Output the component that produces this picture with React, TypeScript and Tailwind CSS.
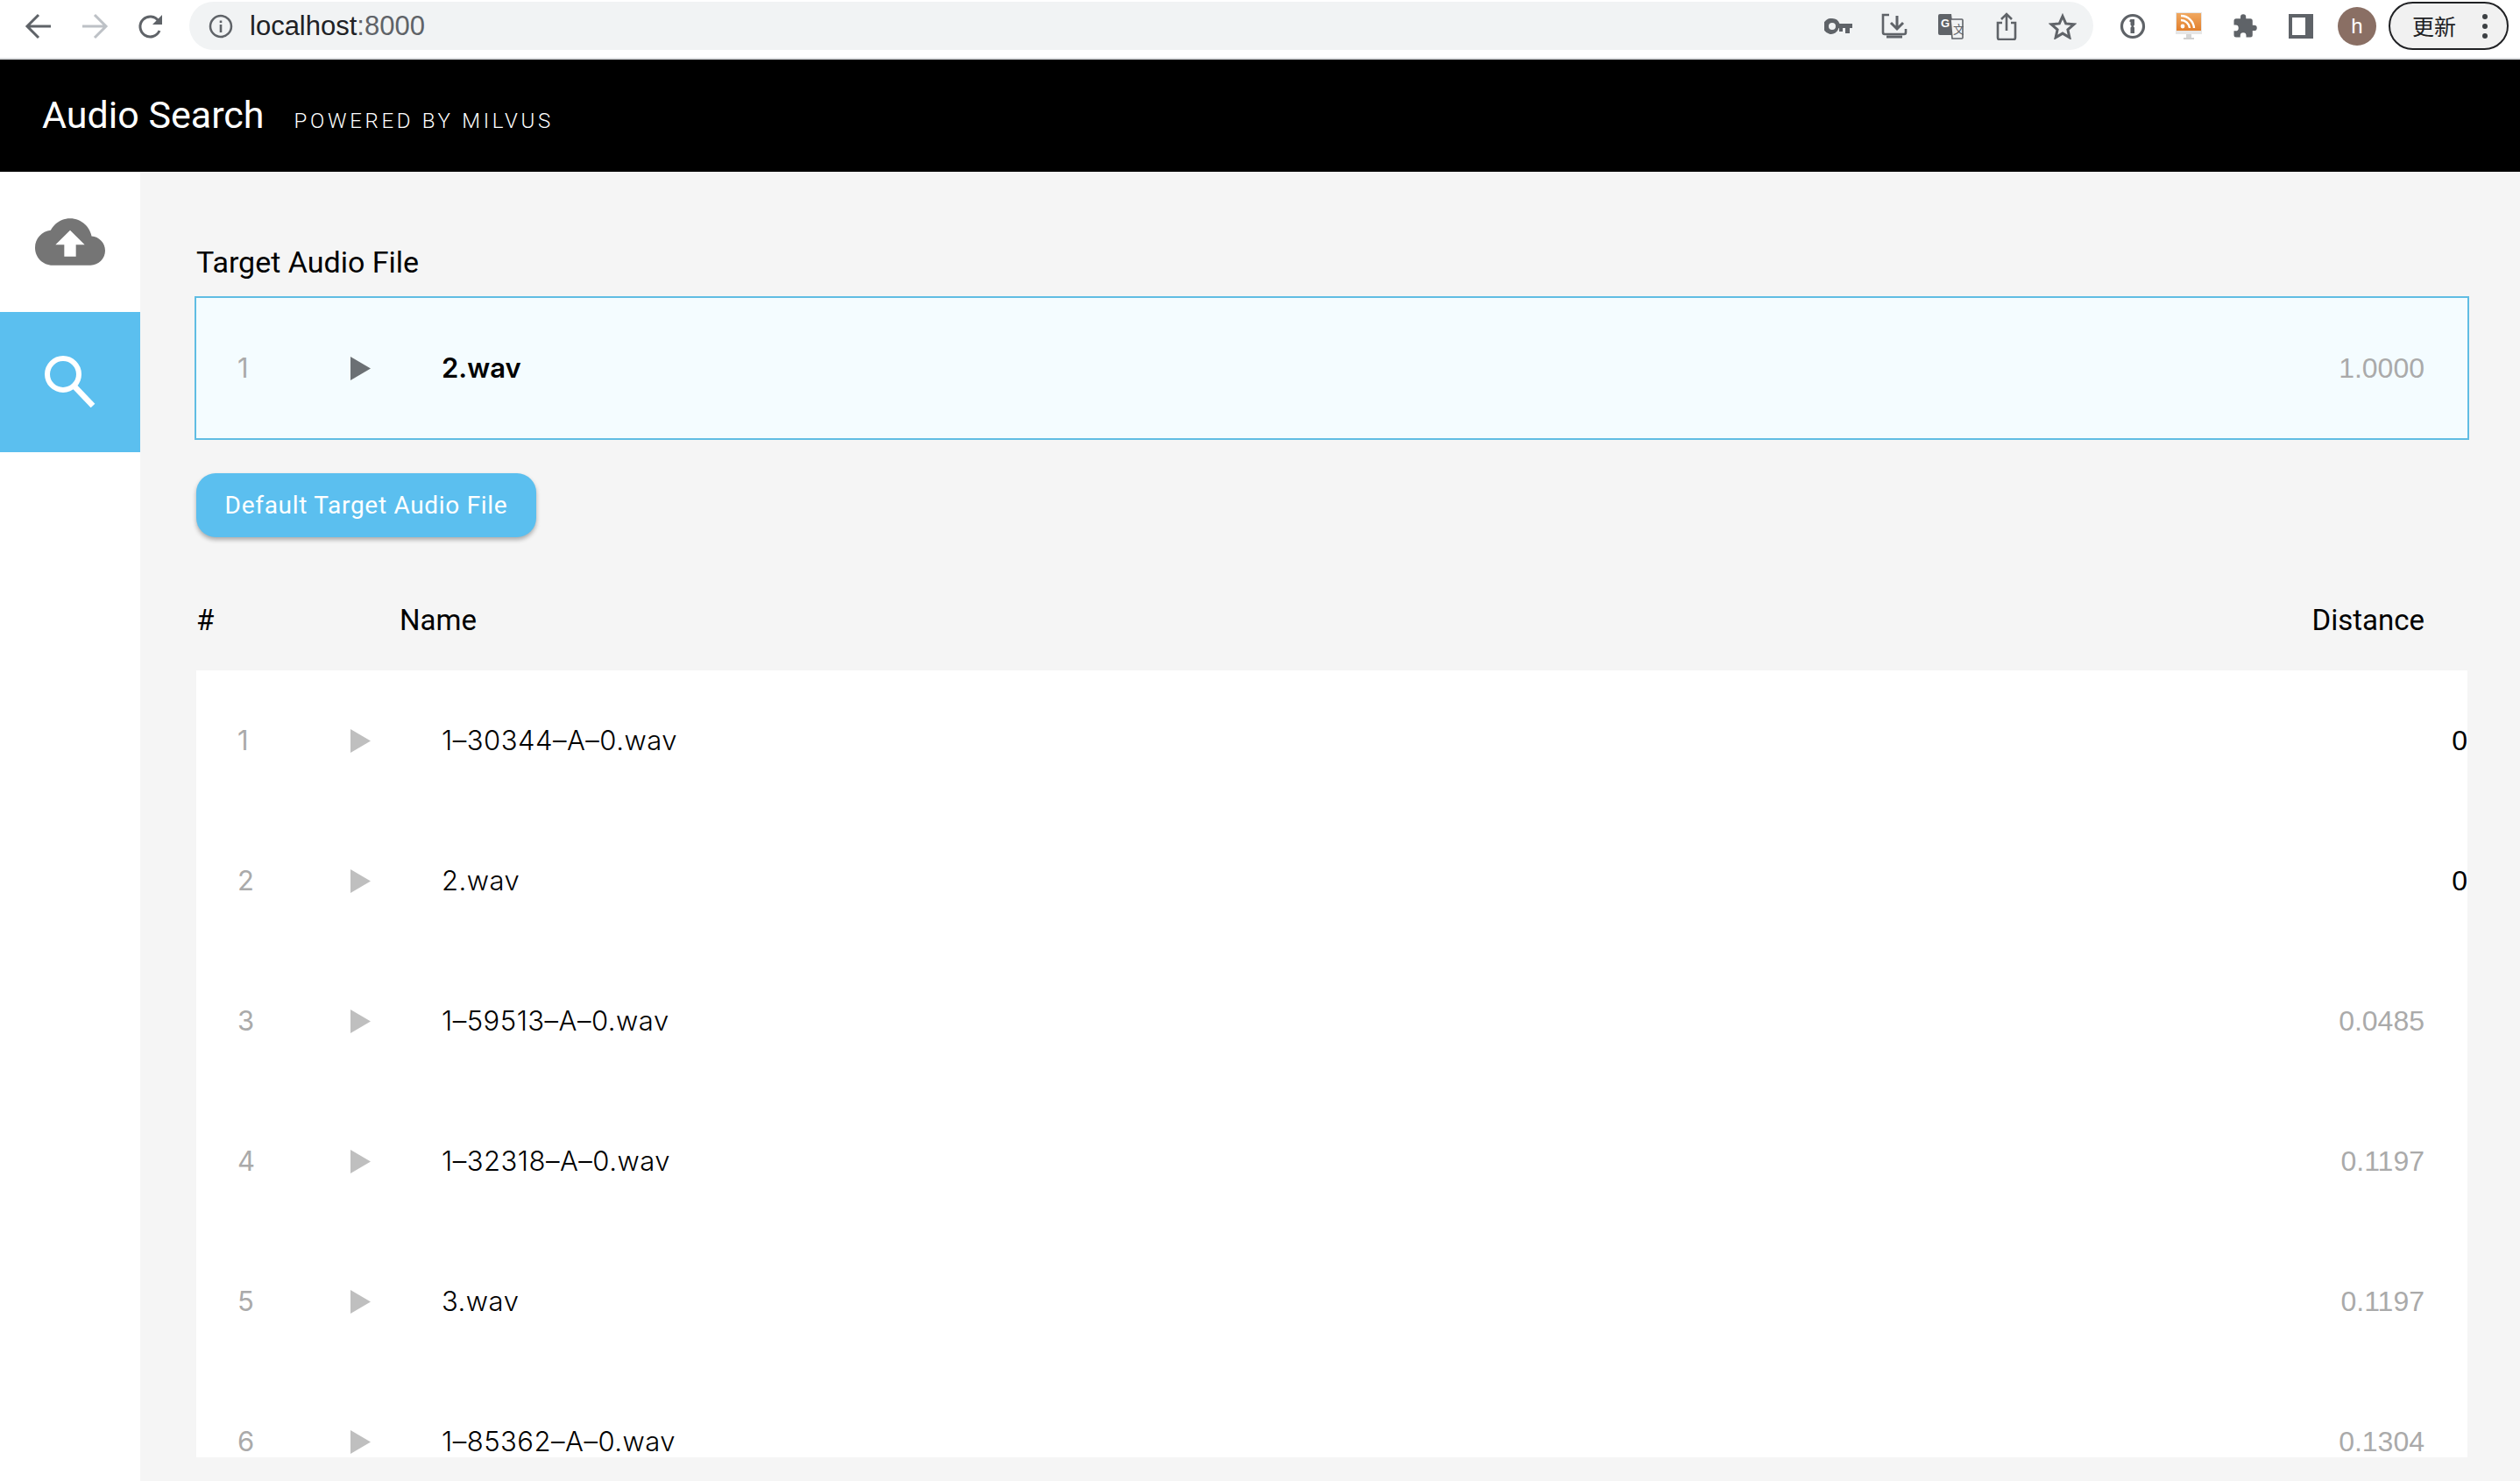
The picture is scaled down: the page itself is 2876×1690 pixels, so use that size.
const rows = [
  { id: 1, name: "1–30344–A–0.wav", distance: "0" },
  { id: 2, name: "2.wav", distance: "0" },
  { id: 3, name: "1–59513–A–0.wav", distance: "0.0485" },
  { id: 4, name: "1–32318–A–0.wav", distance: "0.1197" },
  { id: 5, name: "3.wav", distance: "0.1197" },
  { id: 6, name: "1–85362–A–0.wav", distance: "0.1304" },
];

const sans = "font-['Liberation_Sans',Roboto,sans-serif]";

function Play({ color }: { color: string }) {
  return (
    <svg width="23" height="27" viewBox="0 0 23 27">
      <polygon points="0,0 23,13.5 0,27" fill={color} />
    </svg>
  );
}

function Slot({ children }: { children: React.ReactNode }) {
  return <div className="w-[64px] h-full flex items-center justify-center shrink-0">{children}</div>;
}

function BrowserBar() {
  return (
    <div className="h-[68px] shrink-0 bg-white border-b-2 border-[#dcdee0] flex items-start pt-[2px] pl-[12px]">
      <div className="h-[55px] flex items-center">
        <Slot>
          <svg width="32" height="32" viewBox="0 0 32 32" fill="none" stroke="#5f6368" strokeWidth="3">
            <path d="M30 16H4M16 3L3 16l13 13" />
          </svg>
        </Slot>
        <Slot>
          <svg width="32" height="32" viewBox="0 0 32 32" fill="none" stroke="#bdc1c6" strokeWidth="3">
            <path d="M2 16h26M16 3l13 13-13 13" />
          </svg>
        </Slot>
        <Slot>
          <svg width="30" height="30" viewBox="0 0 30 30">
            <path d="M25 20a11.5 11.5 0 1 1-1-11" fill="none" stroke="#5f6368" strokeWidth="3" />
            <path d="M28 2v11H17z" fill="#5f6368" />
          </svg>
        </Slot>
      </div>
      <div className="ml-[12px] w-[2173px] h-[55px] rounded-full bg-[#f1f3f4] flex items-center">
        <div className="w-[72px] flex justify-center">
          <svg width="28" height="28" viewBox="0 0 28 28" fill="none">
            <circle cx="14" cy="14" r="12" stroke="#5f6368" strokeWidth="2.5" />
            <rect x="12.7" y="12" width="2.6" height="9" fill="#5f6368" />
            <rect x="12.7" y="7.5" width="2.6" height="2.6" fill="#5f6368" />
          </svg>
        </div>
        <div className={`${sans} text-[31px] leading-none text-[#202124] -ml-[3px]`}>
          localhost<span className="text-[#5f6368]">:8000</span>
        </div>
        <div className="ml-auto mr-[3px] h-full flex items-center">
          <Slot>
            <svg width="32" height="18" viewBox="0 0 32 18" fill="#5f6368">
              <path d="M9 0a9 9 0 0 1 8.5 6H32v5h-3v6h-5v-6h-3v4h-4v-4h-.5A9 9 0 1 1 9 0zm0 5a4 4 0 1 0 0 8 4 4 0 0 0 0-8z" />
            </svg>
          </Slot>
          <Slot>
            <svg width="30" height="30" viewBox="0 0 30 30" fill="none" stroke="#5f6368" strokeWidth="2.6">
              <path d="M9 2H2v20a2 2 0 0 0 2 2h22a2 2 0 0 0 2-2v-4" />
              <path d="M18 3v14M11 11l7 7 7-7" strokeWidth="3" />
              <rect x="6" y="25.5" width="18" height="3" fill="#5f6368" stroke="none" />
            </svg>
          </Slot>
          <Slot>
            <svg width="30" height="30" viewBox="0 0 30 30">
              <path d="M3 1h13l3 24H3a2 2 0 0 1-2-2V3a2 2 0 0 1 2-2z" fill="#5f6368" />
              <path d="M15 7h13a1 1 0 0 1 1 1v20a1 1 0 0 1-1 1H17z" fill="#f1f3f4" stroke="#5f6368" strokeWidth="1.6" />
              <text x="4" y="16" fontSize="13" fontWeight="700" fill="#fff" fontFamily="Liberation Sans">G</text>
              <text x="18" y="23" fontSize="13" fill="#5f6368" fontFamily="Noto Sans CJK SC">文</text>
            </svg>
          </Slot>
          <Slot>
            <svg width="24" height="32" viewBox="0 0 24 32" fill="none" stroke="#5f6368" strokeWidth="2.6">
              <path d="M7 12H2v17a2 2 0 0 0 2 2h16a2 2 0 0 0 2-2V12h-5" />
              <path d="M12 21V3M6 8l6-6 6 6" />
            </svg>
          </Slot>
          <Slot>
            <svg width="32" height="30" viewBox="0 0 32 30" fill="none" stroke="#5f6368" strokeWidth="3" strokeLinejoin="miter">
              <path d="M16 3.5l3.7 8.4 9.1.9-6.9 6 2 9-7.9-4.7-7.9 4.7 2-9-6.9-6 9.1-.9z" />
            </svg>
          </Slot>
        </div>
      </div>
      <div className="ml-[13px] h-[55px] flex items-center">
        <Slot>
          <svg width="30" height="30" viewBox="0 0 30 30" fill="none">
            <circle cx="15" cy="15" r="12.5" stroke="#5f6368" strokeWidth="3.2" />
            <path d="M12.5 7h4.5v6.5l-1.2 1.5 1.2 1.5V23h-4.5v-6.5l1.3-1.5-1.3-1.5V10h-1V8z" fill="#5f6368" />
          </svg>
        </Slot>
        <Slot>
          <svg width="30" height="32" viewBox="0 0 30 32">
            <defs>
              <linearGradient id="rss" x1="0" y1="0" x2="0" y2="1">
                <stop offset="0" stopColor="#f0a860" />
                <stop offset="1" stopColor="#e27f2c" />
              </linearGradient>
            </defs>
            <rect x="0" y="0" width="30" height="25" fill="#e6e6e6" />
            <rect x="1" y="1" width="28" height="20" fill="url(#rss)" />
            <circle cx="8" cy="16" r="2.4" fill="#fff" />
            <path d="M6 9a10 10 0 0 1 10 9M6 4a15 15 0 0 1 15 14" fill="none" stroke="#fff" strokeWidth="2.4" />
            <rect x="12" y="25" width="6" height="4" fill="#d5d5d5" />
            <rect x="9" y="29" width="12" height="2" fill="#cfcfcf" />
          </svg>
        </Slot>
        <Slot>
          <svg width="30" height="30" viewBox="0 0 24 24" fill="#5f6368">
            <path d="M20.5 11H19V7a2 2 0 0 0-2-2h-4V3.5a2.5 2.5 0 0 0-5 0V5H4a2 2 0 0 0-2 2v3.8h1.5a2.7 2.7 0 0 1 0 5.4H2V20a2 2 0 0 0 2 2h3.8v-1.5a2.7 2.7 0 0 1 5.4 0V22H17a2 2 0 0 0 2-2v-4h1.5a2.5 2.5 0 0 0 0-5z" />
          </svg>
        </Slot>
        <Slot>
          <div className="w-[28px] h-[28px] border-[4px] border-r-[9px] border-[#5f6368] bg-white" />
        </Slot>
        <Slot>
          <div className={`${sans} w-[44px] h-[44px] rounded-full bg-[#8a6f64] text-white text-[24px] flex items-center justify-center`}>
            h
          </div>
        </Slot>
        <div className="ml-[4px] w-[137px] h-[55px] rounded-full border-2 border-[#202124] bg-[#f1f1f1] flex items-center pl-[25px]">
          <span className="font-['Noto_Sans_CJK_SC','Noto_Sans_CJK_JP',sans-serif] text-[25px] leading-none text-[#202124]">更新</span>
          <svg className="ml-[30px]" width="6" height="28" viewBox="0 0 6 28" fill="#3c4043">
            <circle cx="3" cy="3" r="3" />
            <circle cx="3" cy="14" r="3" />
            <circle cx="3" cy="25" r="3" />
          </svg>
        </div>
      </div>
    </div>
  );
}

export default function App() {
  return (
    <div className={`${sans} h-screen flex flex-col overflow-hidden bg-white text-black`}>
      <BrowserBar />

      {/* header */}
      <header className="h-[128px] shrink-0 bg-black text-white flex items-baseline pl-[48px] pt-[35px] font-['Roboto',sans-serif]">
        <span className="text-[43px] leading-[56px]">Audio Search</span>
        <span className="ml-[34px] text-[24px] tracking-[3.7px] font-light">POWERED BY MILVUS</span>
      </header>

      <div className="flex-1 min-h-0 flex">
        {/* sidebar */}
        <aside className="w-[160px] shrink-0 bg-white">
          <div className="h-[160px] flex items-center justify-center">
            <svg width="80" height="80" viewBox="0 0 24 24" fill="#757575">
              <path d="M19.35 10.04C18.67 6.59 15.64 4 12 4 9.11 4 6.6 5.64 5.35 8.04 2.34 8.36 0 10.91 0 14c0 3.31 2.69 6 6 6h13c2.76 0 5-2.24 5-5 0-2.64-2.05-4.78-4.65-4.96zM14 13v4h-4v-4H7l5-5 5 5h-3z" />
            </svg>
          </div>
          <div className="h-[160px] bg-[#5bbfef] flex items-center justify-center">
            <svg className="-mt-[2px]" width="60" height="60" viewBox="0 0 60 60" fill="none" stroke="#fff" strokeWidth="6">
              <circle cx="22" cy="22" r="18" />
              <path d="M35 36l21 22" strokeWidth="6.5" />
            </svg>
          </div>
        </aside>

        {/* main */}
        <main className="flex-1 min-w-0 flex flex-col bg-[#f5f5f5] pl-[64px] pr-[60px] pt-[82px] pb-[27px]">
          <div className="font-['Roboto',sans-serif] text-[34px] leading-[42px] mb-[18px]">Target Audio File</div>

          <div className="-mx-[2px] h-[164px] shrink-0 border-2 border-[#60bde3] bg-[#f4fcff] flex items-center text-[32px]">
            <div className="w-[176px] pl-[47px] font-['Inter',sans-serif] text-[31px] text-[#aaaaaa]">1</div>
            <div className="w-[104px] flex">
              <Play color="#6b7074" />
            </div>
            <div className="flex-1 font-['Inter',sans-serif] text-[31px] font-semibold">2.wav</div>
            <div className="pr-[49px] text-[#aaaaaa]">1.0000</div>
          </div>

          <button className="mt-[38px] w-[388px] h-[73px] shrink-0 rounded-[22px] bg-[#5bbfef] text-white font-['Roboto',sans-serif] text-[28px] tracking-[0.7px] shadow-[0_3px_5px_rgba(0,0,0,0.3)]">
            Default Target Audio File
          </button>

          <div className="mt-[65px] h-[60px] mb-[27px] shrink-0 flex items-center font-['Roboto',sans-serif] text-[33px]">
            <div className="w-[232px]">#</div>
            <div className="flex-1">Name</div>
            <div className="pr-[49px]">Distance</div>
          </div>

          {/* results */}
          <div className="flex-1 min-h-0 overflow-hidden bg-white">
            {rows.map((r) => (
              <div key={r.id} className="h-[160px] flex items-center text-[32px]">
                <div className="w-[176px] pl-[47px] font-['Inter',sans-serif] text-[31px] text-[#aaaaaa]">{r.id}</div>
                <div className="w-[104px] flex">
                  <Play color="#bfbfbf" />
                </div>
                <div className="flex-1 font-['Inter',sans-serif] text-[31px] font-light tracking-[0.5px]">{r.name}</div>
                <div className={r.distance === "0" ? "pr-0" : "pr-[49px] text-[#aaaaaa]"}>{r.distance}</div>
              </div>
            ))}
          </div>
        </main>
      </div>
    </div>
  );
}
